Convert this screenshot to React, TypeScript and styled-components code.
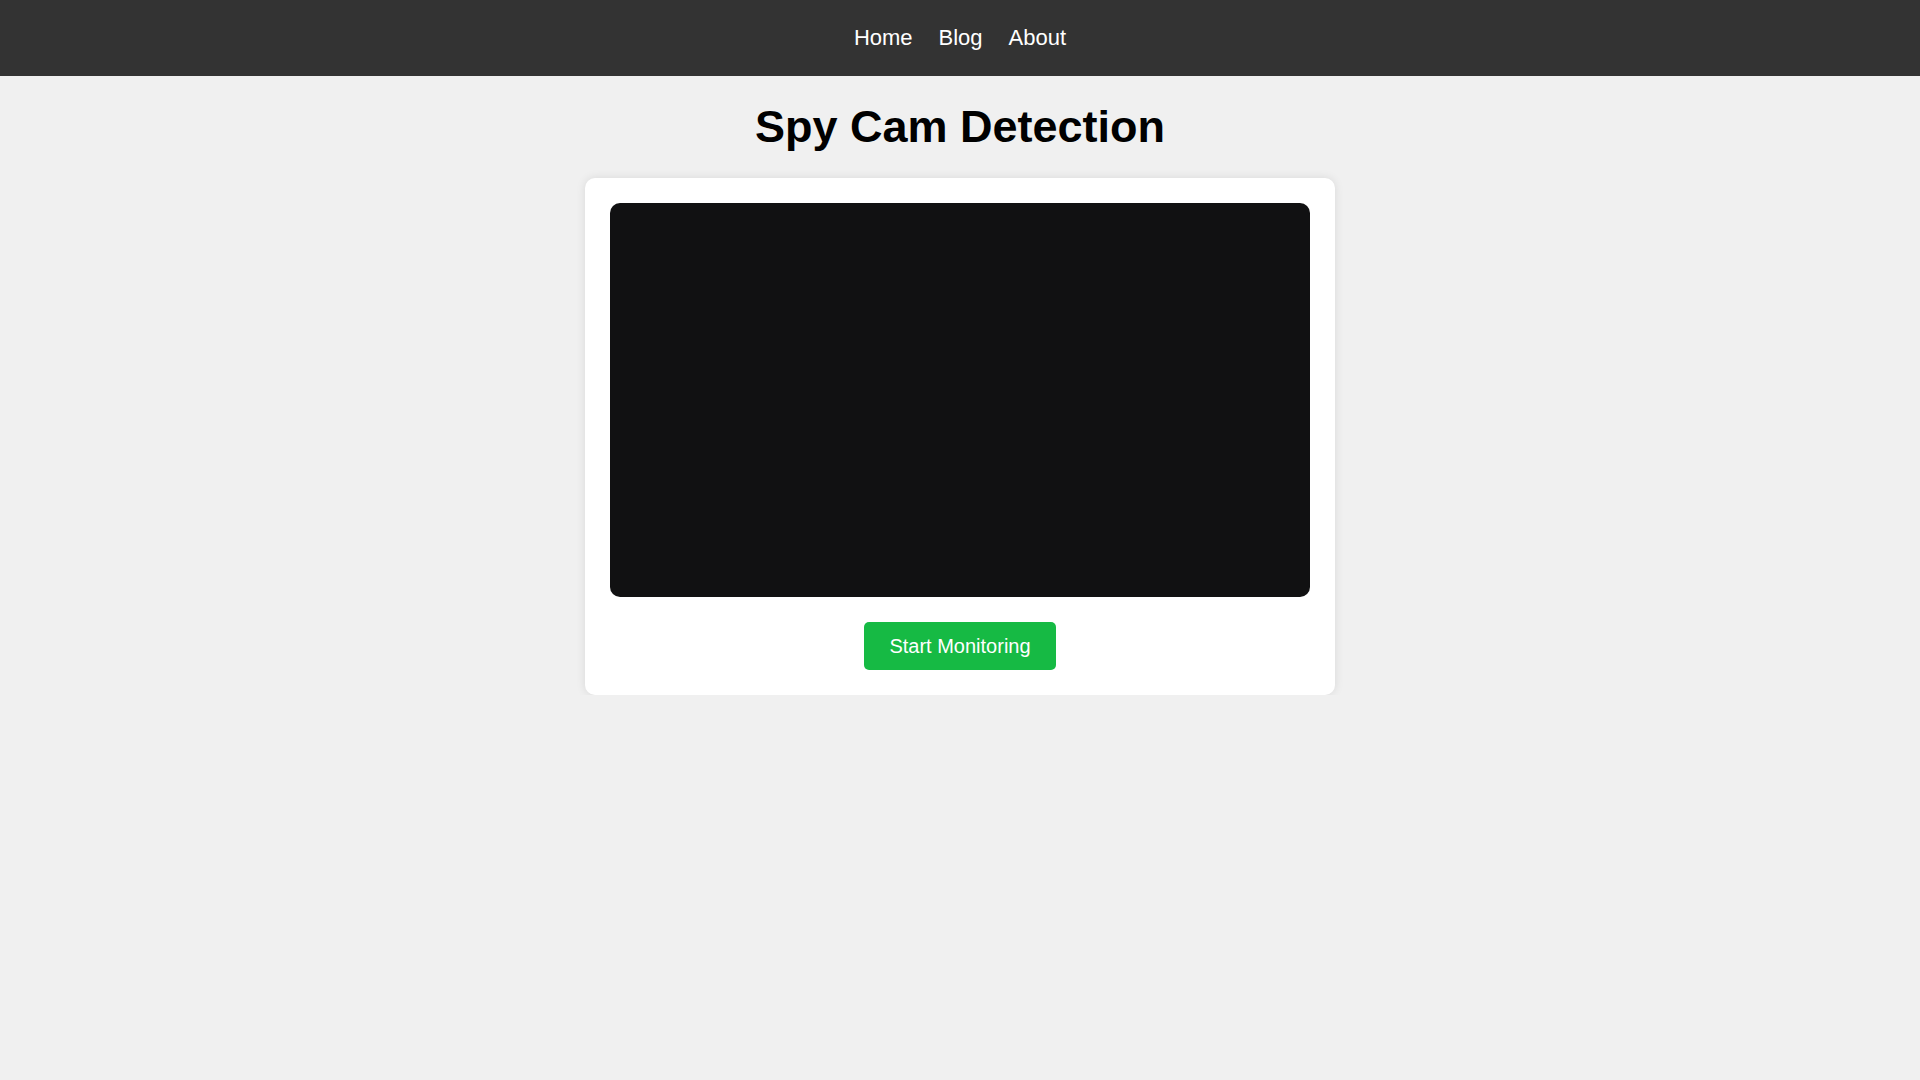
import React from "react";
import styled, { createGlobalStyle } from "styled-components";

const GlobalStyle = createGlobalStyle`
  html, body {
    margin: 0;
    padding: 0;
    background: #f0f0f0;
    font-family: "Liberation Sans", Arial, sans-serif;
  }
`;

const NavBar = styled.nav`
  height: 76px;
  background: #333333;
  display: flex;
  align-items: center;
  justify-content: center;
`;

const NavLink = styled.a`
  color: #ffffff;
  text-decoration: none;
  font-size: 22px;
  margin: 0 13px;
  cursor: pointer;
`;

const Main = styled.main`
  display: flex;
  flex-direction: column;
  align-items: center;
  padding-top: 25px;
`;

const Title = styled.h1`
  margin: 0 0 25px;
  font-size: 45px;
  font-weight: bold;
  color: #000;
  line-height: 52px;
`;

const Card = styled.section`
  width: 750px;
  box-sizing: border-box;
  padding: 25px;
  background: #ffffff;
  border-radius: 10px;
  box-shadow: 0 0 10px rgba(0, 0, 0, 0.1);
  display: flex;
  flex-direction: column;
  align-items: center;
  gap: 25px;
`;

const VideoBox = styled.div`
  width: 700px;
  height: 394px;
  border-radius: 10px;
  background: #111112;
`;

const StartButton = styled.button`
  background: #16ba44;
  color: #ffffff;
  border: none;
  border-radius: 5px;
  font-family: "Liberation Sans", Arial, sans-serif;
  font-size: 20px;
  padding: 12px 25px;
  height: 48px;
  cursor: pointer;
`;

export default function App() {
  return (
    <>
      <GlobalStyle />
      <NavBar>
        <NavLink>Home</NavLink>
        <NavLink>Blog</NavLink>
        <NavLink>About</NavLink>
      </NavBar>
      <Main>
        <Title>Spy Cam Detection</Title>
        <Card>
          <VideoBox />
          <StartButton>Start Monitoring</StartButton>
        </Card>
      </Main>
    </>
  );
}
